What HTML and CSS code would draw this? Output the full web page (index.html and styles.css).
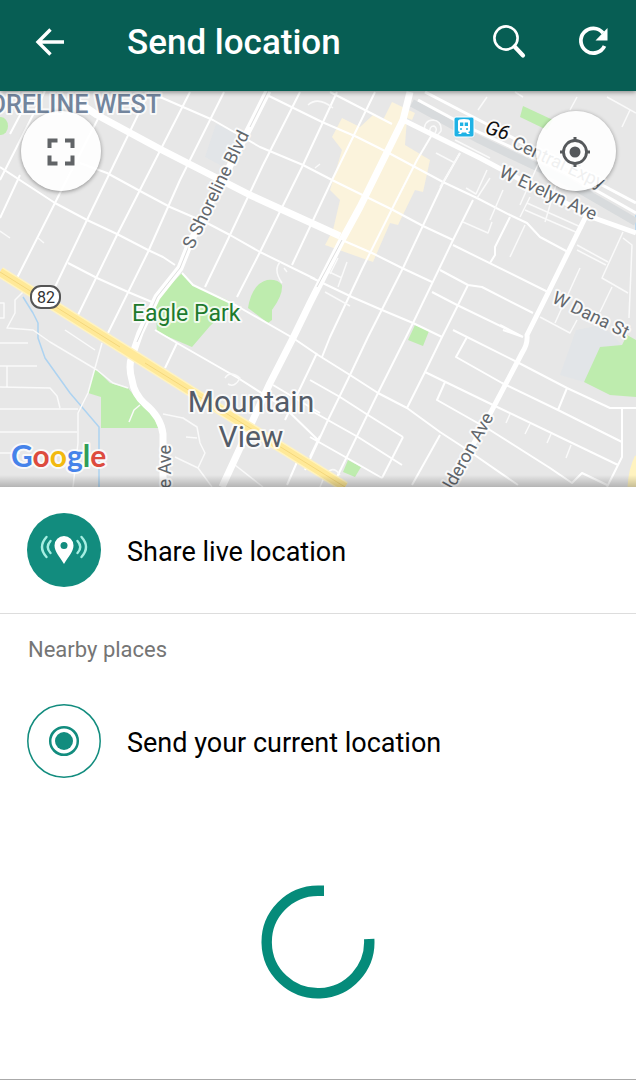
FILE: index.html
```html
<!DOCTYPE html>
<html lang="en">
<head>
<meta charset="utf-8">
<meta name="viewport" content="width=device-width, initial-scale=1">
<title>Send location</title>
<link rel="stylesheet" href="styles.css">
</head>
<body>
<div class="screen">
  <header class="bar">
    <button class="bar-btn" type="button" aria-label="Back">
      <svg width="46" height="46" viewBox="0 0 46 46" fill="none" stroke="#fff" stroke-width="3.400"><path d="M37 23H12M23.500 10.500L11 23L23.500 35.500"/></svg>
    </button>
    <h1 class="bar-title">Send location</h1>
    <div class="bar-actions">
      <button class="bar-btn" type="button" aria-label="Search">
        <svg width="46" height="46" viewBox="0 0 46 46" fill="none" stroke="#fff"><circle cx="19" cy="19" r="11.600" stroke-width="2.600"/><path d="M27.500 27.500L36 36.500" stroke-width="4.200" stroke-linecap="round"/></svg>
      </button>
      <button class="bar-btn" type="button" aria-label="Refresh">
        <svg width="46" height="46" viewBox="0 0 46 46"><path d="M32 14A12.400 12.400 0 1 0 33.500 27" fill="none" stroke="#fff" stroke-width="3.800"/><path d="M36.500 9V21.500H24.500Z" fill="#fff"/></svg>
      </button>
    </div>
  </header>

  <main>
    <section class="map" aria-label="Map of Mountain View">
      <svg class="map-canvas" viewBox="0 91 636 396" role="img" aria-label="Street map">
        <rect class="land" x="0" y="91" width="636" height="396"/>
        <path class="haze" d="M216 124L246 138L222 166L205 157ZM576 330L602 325L622 345L600 347L584 382L560 375Z"/>
        <path class="shops" d="M392 102L415 113L412 120L407 118L405 145L430 160L423 192L415 190L398 225L390 223L373 262L325 245L333 230L340 200L330 190L342 150L332 137L342 118L360 127L373 115L383 120Z"/>
        <path class="park" d="M182 273L193 285L234 303L210 326L192 347L157 332L155 300ZM248 308Q252 284 267 280Q278 279 282 285Q283 295 272 310V320L268 323ZM95 368L110 383L128 388L140 403L153 413L158 428H101V397L88 393ZM415 325L429 331L423 346L408 340ZM348 460L361 467L355 477L343 472ZM600 347L622 345L627 335L636 340V397L610 395L584 382ZM523 106L553 120L547 130L520 117Z"/>
        <ellipse class="park" cx="1" cy="126" rx="7" ry="9"/>
        <path class="river" d="M23 297L33 313L38 323V338L45 358L70 393L99 427V487M636 215V233"/>

        <path class="rail" d="M412 103L480 140L560 178L636 222"/>
        <path class="rail-line" d="M425 92L500 131L636 203M418 100L470 128L560 170L636 213"/>
        <path class="street" d="M105 105L60 193L17 278M149 92L87 220L55 287M190 92L117 235L78 315M224 92L180 180L148 252L108 333M300 92L263 165L230 235L205 287M337 92L303 165L260 252L237 297M375 92L332 180L292 265M45 91L0 180M20 175L0 218M28 100L10 134"/>
        <path class="street" d="M433 133L417 160L390 213L363 267L330 337L322 357M460 153L443 183L403 268L368 337L350 375L328 420L305 470M473 200L453 240L413 323L378 393L337 477M468 285L442 337L425 372L407 408M440 435L412 485M403 437L382 478"/>
        <path class="street" d="M160 97L213 120L260 147L303 165L332 180L393 210L423 226L453 240M453 245L548 292M267 95L322 122L357 137L387 152L443 182L477 198L510 215L527 223L540 237L568 252M0 167L55 203L87 220L117 234L148 250L163 257L175 265M80 163L107 173L140 191L170 207L207 223L230 235L260 252L315 279M310 277L352 297L382 310L413 323L442 337"/>
        <path class="street" d="M330 92L392 124M342 240L372 253L402 268L432 282M68 263L97 278L128 292L152 302M182 273L193 285L237 306L293 338L318 355L350 375L378 393L407 408L440 432L463 447L518 485M155 330L177 343L238 378L285 408L318 440M177 343L165 368M273 385L320 413M317 353L285 420M297 462L287 485M320 436L310 457M310 380L340 397L368 415L403 437M310 410L358 437L402 465M310 437L347 458L382 478"/>
        <path class="street" d="M432 292L457 305L523 337M440 270L468 285L482 287L533 313M453 330L517 362L567 388L610 408H636M467 337L456 357L502 383L558 410L622 442M425 372L493 405L618 465M445 382L437 400L490 430L550 468L572 483L582 473L607 485M622 408V457L607 487M567 388L558 410M510 217L495 247V255L490 263M500 325L523 337M503 330L523 337"/>
        <path class="lane" d="M525 225L510 257M463 222L488 233L492 222M527 203L583 228M525 210L578 233M530 197L520 217M503 190L490 220M623 232L602 278L628 293M577 245L608 262M577 250L606 265M623 238L632 245L629 318M612 287L600 312M580 268L555 323M540 317L570 333L577 320M523 97L515 92M607 97L636 113M630 110L622 127M577 97L570 110M487 97L478 110M308 105Q318 96 333 108M510 414L506 423M530 424L525 434M551 434L547 443M571 445L566 458M338 258L330 274M347 262L338 287M325 270L342 278M325 292L350 306M436 153L455 163M455 140L490 158M460 153L440 187M487 170L476 194L466 188M477 198L490 178M540 160L520 205M556 185L545 222M424 132Q424 120 433 120Q442 121 441 131L436 137M430 133Q429 126 434 126Q438 128 435 133M280 262Q273 270 282 283M284 268L287 272M38 238L44 243M0 231L10 238M315 168L320 164M0 100L20 92M225 378Q230 370 240 378Q235 388 228 384M320 487Q330 460 340 475"/>
        <path class="lane" d="M0 343H28M0 366H37M7 366V387M0 387L50 388L57 396L60 408M0 409H78M0 432H77M0 453H20M102 343L88 393L78 413V443L73 487M25 290L15 300V313L7 328L33 330L50 342L97 370L113 383L128 388M65 330L95 350M0 303H4V318H0M163 414L183 418L197 427L200 443L205 453L198 468L175 457M198 468L212 487M235 465L263 487M140 405L134 410L129 422M186 437L197 438"/>

        <path class="avenue" d="M75 100L97 115L160 149L250 195L340 236"/>
        <path class="avenue" d="M410 92L403 120L360 207L342 240L310 303L293 338L270 383L222 487"/>
        <path class="avenue slim" d="M403 120L480 158L540 190L597 219L636 233M590 208L548 293L527 335Q528 344 522 353L492 410L450 487"/>
        <path class="avenue" d="M268 91L250 127L190 243L180 268L157 297L140 333L132 356Q128 366 132 380Q134 394 145 404Q161 417 163 434V487"/>
        <path class="median" d="M268 91L250 127M190 243L180 268L157 297L137 342M342 240L317 287"/>
        <path class="highway-edge" d="M0 272L133 355L200 397L345 487M633 487Q634 470 640 458"/>
        <path class="highway" d="M0 272L133 355L200 397L345 487"/>
        <path class="highway-mid" d="M0 272L120 347M145 363L345 487"/>

        <rect class="shield" x="31" y="286" width="29" height="22" rx="10"/>
        <text class="shield-text" x="46" y="303">82</text>
        <g>
          <rect x="454" y="117" width="20" height="20" rx="2" fill="#1fb2e5" stroke="#fff"/>
          <path d="M458 121Q458 119 464 119T470 121V130Q470 132 468 132L470 134H467L466 132.500H462L461 134H458L460 132Q458 132 458 130Z" fill="#fff"/>
          <path d="M460 122.500H463.300V126H460ZM464.700 122.500H468V126H464.700Z" fill="#1fb2e5"/>
          <circle cx="461" cy="129" r="1" fill="#1fb2e5"/><circle cx="467" cy="129" r="1" fill="#1fb2e5"/>
        </g>
        <text class="label district" x="161" y="113">SHORELINE WEST</text>
        <text class="label park-name" x="132" y="321">Eagle Park</text>
        <text class="label city" x="251" y="412">Mountain</text>
        <text class="label city" x="251" y="447">View</text>
        <text class="label road" transform="translate(193 250) rotate(-64)">S Shoreline Blvd</text>
        <text class="label road" transform="translate(511 147) rotate(25)">Central Expy</text>
        <text class="label route" transform="translate(484 133) rotate(18)">G6</text>
        <text class="label road" transform="translate(498 176) rotate(25)">W Evelyn Ave</text>
        <text class="label road" transform="translate(551 302) rotate(26)">W Dana St</text>
        <text class="label road end" transform="translate(494 417) rotate(-61)">Calderon Ave</text>
        <text class="label road end" transform="translate(171 445) rotate(-90)">e Ave</text>
        <text class="label google" x="11" y="467"><tspan fill="#4683ea">G</tspan><tspan fill="#dd4b3e">o</tspan><tspan fill="#f2b90f">o</tspan><tspan fill="#4683ea">g</tspan><tspan fill="#2f9e57">l</tspan><tspan fill="#dd4b3e">e</tspan></text>
      </svg>
      <button class="fab fab-left" type="button" aria-label="Full screen">
        <svg width="80" height="80" viewBox="0 0 80 80" fill="none" stroke="#616467" stroke-width="4"><path d="M28.500 37V29.500H36.500M44 29.500H51.500V37M51.500 44.500V52.500H44M36.500 52.500H28.500V44.500"/></svg>
      </button>
      <button class="fab fab-right" type="button" aria-label="My location">
        <svg width="80" height="80" viewBox="0 0 80 80" fill="none" stroke="#55585b"><circle cx="39" cy="41" r="11.500" stroke-width="2.800"/><circle cx="39" cy="41" r="5.500" fill="#55585b" stroke="none"/><path d="M39 26V30M39 52V56M24 41H28M50 41H54" stroke-width="3"/></svg>
      </button>
    </section>

    <button class="row row-live" type="button">
      <svg class="row-icon" width="74" height="74" viewBox="0 0 74 74" aria-hidden="true"><circle cx="37" cy="37" r="37" fill="#128c7e"/><path d="M37 51C33 44 27.500 38.500 27.500 32.500A9.500 9.500 0 0 1 46.500 32.500C46.500 38.500 41 44 37 51Z" fill="#fff"/><circle cx="37" cy="32.500" r="3.500" fill="#128c7e"/><path d="M23.500 28Q18 34 23.500 40M19.500 24Q10.500 34 19.500 44M50.500 28Q56 34 50.500 40M54.500 24Q63.500 34 54.500 44" fill="none" stroke="#a6eee2" stroke-width="2.400" stroke-linecap="round"/></svg>
      <span>Share live location</span>
    </button>
    <section class="nearby">
      <h2 class="nearby-title">Nearby places</h2>
      <button class="row" type="button">
        <svg class="row-icon" width="74" height="74" viewBox="0 0 74 74" aria-hidden="true" fill="none" stroke="#128c7e"><circle cx="37" cy="37" r="36.200" stroke-width="1.500"/><circle cx="37" cy="37" r="13.800" stroke-width="2.500"/><circle cx="37" cy="37" r="9" fill="#128c7e" stroke="none"/></svg>
        <span>Send your current location</span>
      </button>
      <div class="loader" role="status" aria-label="Loading">
        <svg width="114" height="114" viewBox="0 0 114 114" fill="none" stroke="#058b7a" stroke-width="10.400"><path d="M108.200 54A51.300 51.300 0 1 1 57 5.700H63"/></svg>
      </div>
    </section>
  </main>
</div>
</body>
</html>
```
FILE: styles.css
```css
* { box-sizing: border-box; }
body { margin: 0; font-family: Roboto, "Liberation Sans", sans-serif; background: #fff; color: #000; }
button { border: 0; padding: 0; background: none; color: inherit; font: inherit; cursor: pointer; }
svg { display: block; }

.screen { min-height: 100vh; border-bottom: 1px solid #aaa; }

.bar { position: relative; z-index: 1; display: flex; align-items: center; height: 91px; padding: 0 19px 8px 27px; background: #075e54; color: #fff; box-shadow: 0 1px 5px rgba(0, 0, 0, .45); }
.bar-btn { flex: none; width: 46px; height: 46px; }
.bar-title { flex: 1; margin: 2px 0 0 54px; font-size: 35px; line-height: 40px; font-weight: 500; }
.bar-actions { display: flex; gap: 38px; }

.map { position: relative; overflow: hidden; }
.map::after { content: ""; position: absolute; inset: auto 0 0; height: 12px; background: linear-gradient(transparent, rgba(0, 0, 0, .22)); pointer-events: none; }
.map-canvas { width: 100%; height: auto; }
.map-canvas path { fill: none; stroke-linejoin: round; }
.land { fill: #e7e7e7; }
.map-canvas .haze { fill: #e2e5e8; }
.map-canvas .shops { fill: #fbf3dc; }
.map-canvas .park { fill: #beecae; }
.map-canvas g path:nth-of-type(1) { fill: #fff; }
.map-canvas g path:nth-of-type(2) { fill: #1fb2e5; }
.river { stroke: #add3f1; stroke-width: 1.500px; }
.rail { stroke: #d8dbdd; stroke-width: 8px; }
.rail-line { stroke: #fff; stroke-width: 3px; }
.street { stroke: #fff; stroke-width: 2px; }
.lane { stroke: #fafafa; stroke-width: 1.500px; }
.avenue { stroke: #fff; stroke-width: 7px; }
.avenue.slim { stroke-width: 5px; }
.median { stroke: #dedede; stroke-width: 1px; }
.highway-edge { stroke: #fff3c0; stroke-width: 11px; }
.highway { stroke: #ffe998; stroke-width: 8px; }
.highway-mid { stroke: #f4d77c; stroke-width: 1px; }
.shield { fill: #fff; stroke: #555; stroke-width: 2px; }
.shield-text { font-size: 16px; fill: #333; text-anchor: middle; }
.label { paint-order: stroke; stroke: #fff; stroke-opacity: .8; stroke-width: 4px; stroke-linejoin: round; }
.district { font-size: 25px; font-weight: 500; fill: #73859d; text-anchor: end; }
.park-name { font-size: 23px; fill: #207a2d; }
.city { font-size: 30px; fill: #545c68; text-anchor: middle; }
.road { font-size: 18px; fill: #62676c; }
.road.end { text-anchor: end; }
.route { font-size: 20px; font-style: italic; fill: #111; }
.google { font-family: Lato, sans-serif; font-size: 30px; font-weight: 700; }

.fab { position: absolute; top: 20px; width: 80px; height: 80px; border-radius: 50%; background: rgba(255, 255, 255, .9); box-shadow: 0 1px 4px rgba(0, 0, 0, .4); }
.fab-left { left: 21px; }
.fab-right { right: 20px; }

.row { display: flex; align-items: center; gap: 26px; width: 100%; padding: 0 27px; font-size: 27px; line-height: 32px; text-align: left; }
.row-icon { flex: none; }
.row-live { padding: 26px 27px; border-bottom: 1px solid #ddd; }
.row span { padding-top: 4px; }
.nearby-title { margin: 0; padding: 22px 28px 40px; font-size: 22px; line-height: 28px; font-weight: 400; color: #757575; }
.loader { display: flex; justify-content: center; padding: 107px 0 40px; }
```
